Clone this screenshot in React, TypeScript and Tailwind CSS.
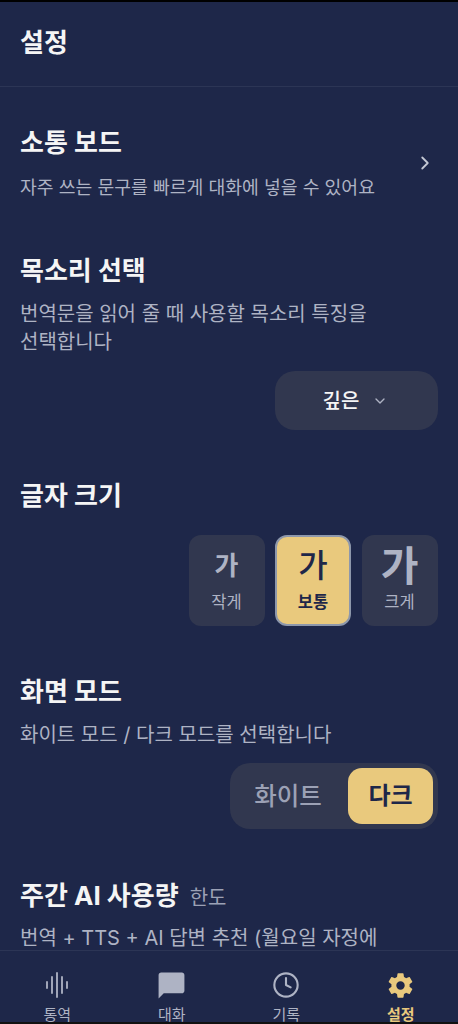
import React from 'react';
import { ChevronRight, ChevronDown, Clock } from 'lucide-react';
import { IoSettingsSharp } from 'react-icons/io5';

const sizes = [
  { label: '작게', glyph: 'text-[26px] font-bold', active: false },
  { label: '보통', glyph: 'text-[32px] font-medium', active: true },
  { label: '크게', glyph: 'text-[41px] font-bold', active: false },
];

const SectionTitle = ({ children }: { children: React.ReactNode }) => (
  <h2 className="text-[26px] leading-[36px] font-bold text-[#f5f5f5]">{children}</h2>
);

const Desc = ({ children }: { children: React.ReactNode }) => (
  <p className="text-[20px] leading-[28px] text-[#aeb3c4]">{children}</p>
);

const WaveIcon = () => (
  <svg viewBox="0 0 24 26" className="w-[24px] h-[26px]" fill="none" stroke="currentColor" strokeWidth="1.8" strokeLinecap="round">
    <path d="M2 10v6M7 5v16M12 1v24M17 5v16M22 10v6" />
  </svg>
);

const ChatIcon = () => (
  <svg viewBox="0 0 24 24" className="w-[31px] h-[31px]" fill="currentColor">
    <path d="M20 2H4c-1.1 0-2 .9-2 2v18l4-4h14c1.1 0 2-.9 2-2V4c0-1.1-.9-2-2-2z" />
  </svg>
);

const tabs = [
  { label: '통역', icon: <WaveIcon />, active: false },
  { label: '대화', icon: <ChatIcon />, active: false },
  { label: '기록', icon: <Clock className="w-[28px] h-[28px]" strokeWidth={1.8} />, active: false },
  { label: '설정', icon: <IoSettingsSharp className="w-[27px] h-[27px]" />, active: true },
];

export default function App() {
  return (
    <div
      className="h-[1024px] w-[458px] flex flex-col overflow-hidden bg-[#1e2749]"
      style={{ fontFamily: 'Inter, "Noto Sans CJK KR", sans-serif' }}
    >
      <div className="h-[2px] bg-black shrink-0" />
      <header className="h-[85px] shrink-0 flex items-center px-5 pb-[4px] border-b border-[#2c3555]">
        <h1 className="text-[26px] font-bold text-[#f5f5f5]">설정</h1>
      </header>

      <main className="flex-1 overflow-hidden px-5">
        <section className="flex items-center justify-between pt-[38px]">
          <div>
            <SectionTitle>소통 보드</SectionTitle>
            <p className="mt-[12px] text-[18.25px] leading-[28px] text-[#aeb3c4]">자주 쓰는 문구를 빠르게 대화에 넣을 수 있어요</p>
          </div>
          <ChevronRight className="w-[22px] h-[22px] text-[#c3c7d3] mr-[2px] mt-[-1px]" strokeWidth={2} />
        </section>

        <section className="pt-[52px]">
          <SectionTitle>목소리 선택</SectionTitle>
          <div className="mt-[11px]"><Desc>번역문을 읽어 줄 때 사용할 목소리 특징을<br />선택합니다</Desc></div>
          <div className="flex justify-end mt-[15px]">
            <button className="w-[163px] h-[59px] rounded-[20px] bg-[#31374f] flex items-center justify-center gap-[13px] pr-[2px] text-[20px] font-medium text-[#f5f5f5]">
              깊은
              <ChevronDown className="w-[16px] h-[16px] text-[#aeb3c4]" strokeWidth={2} />
            </button>
          </div>
        </section>

        <section className="pt-[48px]">
          <SectionTitle>글자 크기</SectionTitle>
          <div className="flex justify-end gap-[10.5px] mt-[21px] mr-[0.5px]">
            {sizes.map((s) => (
              <button
                key={s.label}
                className={`w-[76px] h-[91px] rounded-[12px] flex flex-col items-center justify-center pb-[2px] ${
                  s.active ? 'bg-[#e9c97d] border-2 border-[#8d97ab] text-[#1e2749]' : 'bg-[#31374f] text-[#aeb3c4]'
                }`}
              >
                <span className={`${s.glyph} h-[40px] leading-[40px]`}>가</span>
                <span className={`text-[16.5px] leading-[22px] mt-[5px] ${s.active ? 'font-bold' : ''}`}>{s.label}</span>
              </button>
            ))}
          </div>
        </section>

        <section className="pt-[48px]">
          <SectionTitle>화면 모드</SectionTitle>
          <div className="mt-[11px]"><Desc>화이트 모드 / 다크 모드를 선택합니다</Desc></div>
          <div className="flex justify-end mt-[14px]">
            <div className="w-[208px] h-[66px] rounded-[20px] bg-[#31374f] flex items-center p-[5px]">
              <span className="flex-1 pr-[7px] text-center text-[24.5px] font-medium text-[#9ca1b5]">화이트</span>
              <span className="w-[85px] h-[56px] rounded-[14px] bg-[#e9c97d] flex items-center justify-center text-[24px] font-bold text-[#1e2749]">다크</span>
            </div>
          </div>
        </section>

        <section className="pt-[49px]">
          <div className="flex items-baseline gap-[11px]">
            <SectionTitle>주간 AI 사용량</SectionTitle>
            <span className="text-[20px] text-[#9ca1b5]">한도</span>
          </div>
          <div className="mt-[10px]"><Desc>번역 + TTS + AI 답변 추천 (월요일 자정에</Desc></div>
        </section>
      </main>

      <nav className="h-[72px] shrink-0 grid grid-cols-4 border-t border-[#2c3555] text-[15px]">
        {tabs.map((t) => (
          <div key={t.label} className={`flex flex-col items-center ${t.active ? 'text-[#e9c97d]' : 'text-[#aeb3c4]'}`}>
            <div className="h-[34px] mt-[17px] flex items-center justify-center">{t.icon}</div>
            <span className={`leading-[15px] mt-[5px] ${t.active ? 'font-bold' : ''}`}>{t.label}</span>
          </div>
        ))}
      </nav>
      <div className="h-[2px] bg-[#111] shrink-0" />
    </div>
  );
}
